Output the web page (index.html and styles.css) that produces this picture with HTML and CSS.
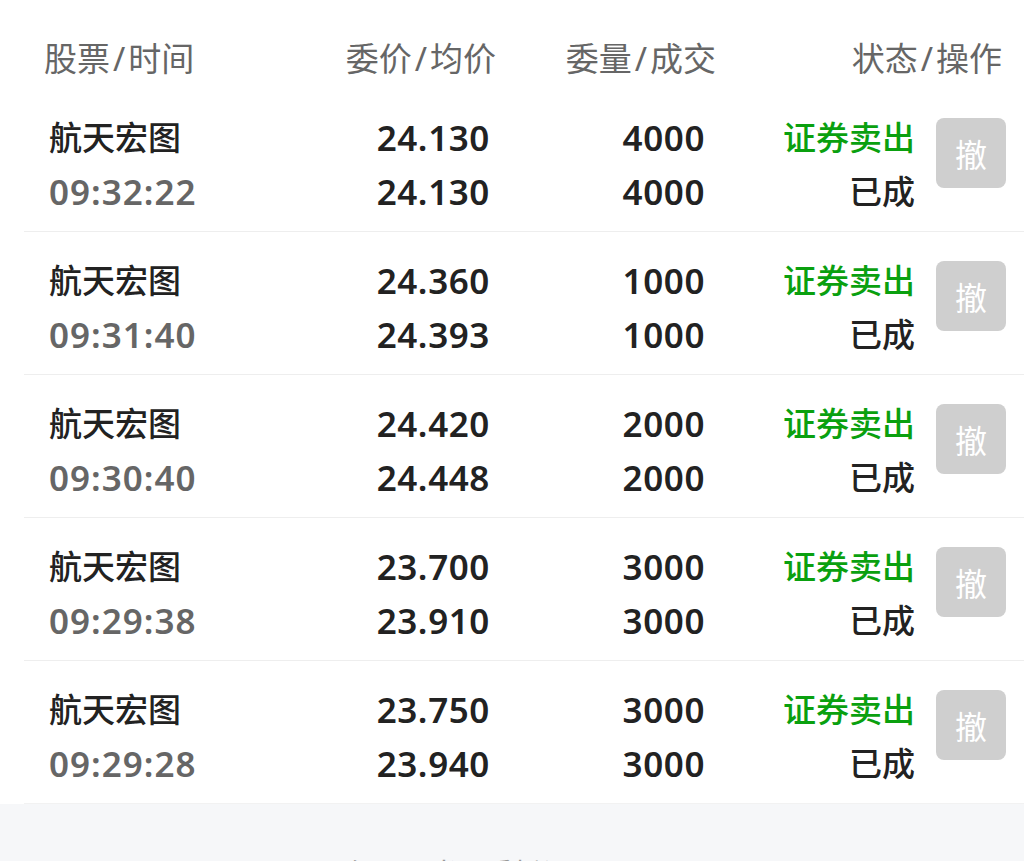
FILE: index.html
```html
<!DOCTYPE html>
<html lang="zh-CN">
<head>
<meta charset="utf-8">
<title>委托</title>
<link rel="stylesheet" href="styles.css">
</head>
<body>
<div class="panel">
  <div class="head">
    <div class="h h1">股票<span class="sl">/</span>时间</div>
    <div class="h">委价<span class="sl">/</span>均价</div>
    <div class="h">委量<span class="sl">/</span>成交</div>
    <div class="h">状态<span class="sl">/</span>操作</div>
  </div>
  <div class="row">
    <div class="c c1"><span class="name">航天宏图</span><span class="time">09:32:22</span></div>
    <div class="c num"><span>24.130</span><span>24.130</span></div>
    <div class="c num"><span>4000</span><span>4000</span></div>
    <div class="c st"><span class="sell">证券卖出</span><span>已成</span></div>
    <div class="op"><button class="btn">撤</button></div>
  </div>
  <div class="row">
    <div class="c c1"><span class="name">航天宏图</span><span class="time">09:31:40</span></div>
    <div class="c num"><span>24.360</span><span>24.393</span></div>
    <div class="c num"><span>1000</span><span>1000</span></div>
    <div class="c st"><span class="sell">证券卖出</span><span>已成</span></div>
    <div class="op"><button class="btn">撤</button></div>
  </div>
  <div class="row">
    <div class="c c1"><span class="name">航天宏图</span><span class="time">09:30:40</span></div>
    <div class="c num"><span>24.420</span><span>24.448</span></div>
    <div class="c num"><span>2000</span><span>2000</span></div>
    <div class="c st"><span class="sell">证券卖出</span><span>已成</span></div>
    <div class="op"><button class="btn">撤</button></div>
  </div>
  <div class="row">
    <div class="c c1"><span class="name">航天宏图</span><span class="time">09:29:38</span></div>
    <div class="c num"><span>23.700</span><span>23.910</span></div>
    <div class="c num"><span>3000</span><span>3000</span></div>
    <div class="c st"><span class="sell">证券卖出</span><span>已成</span></div>
    <div class="op"><button class="btn">撤</button></div>
  </div>
  <div class="row">
    <div class="c c1"><span class="name">航天宏图</span><span class="time">09:29:28</span></div>
    <div class="c num"><span>23.750</span><span>23.940</span></div>
    <div class="c num"><span>3000</span><span>3000</span></div>
    <div class="c st"><span class="sell">证券卖出</span><span>已成</span></div>
    <div class="op"><button class="btn">撤</button></div>
  </div>
</div>
<div class="foot">仅显示当日委托记录</div>
</body>
</html>
```
FILE: styles.css
```css
html, body {
  margin: 0;
  padding: 0;
  background: #f6f7f9;
  overflow: hidden;
  font-family: "Noto Sans", "Noto Sans CJK SC", sans-serif;
}
.panel {
  background: #ffffff;
}
.head {
  display: grid;
  grid-template-columns: 1fr 160px 220px 286px;
  padding: 0 22px 0 44px;
  height: 89px;
  box-sizing: border-box;
}
.h {
  font-size: 33px;
  color: #666666;
  text-align: right;
  line-height: 40px;
  margin-top: 37px;
  align-self: start;
  font-family: "Noto Sans CJK SC", sans-serif;
}
.h1 {
  text-align: left;
}
.sl {
  font-family: "Noto Sans", sans-serif;
  margin: 0 3px;
}
.row {
  display: grid;
  grid-template-columns: 1fr 150px 215px 210px 91px;
  margin-left: 24px;
  padding: 22px 18px 12px 25px;
  border-bottom: 1px solid #eeeeee;
  box-sizing: border-box;
  height: 143px;
}
.row:last-child {
  border-bottom-color: #f2f2f2;
}
.c {
  display: flex;
  flex-direction: column;
  line-height: 54px;
}
.c1 .name {
  font-size: 33px;
  color: #222222;
  font-weight: 500;
}
.c1 .time {
  font-size: 35px;
  color: #666666;
  font-weight: 600;
  letter-spacing: 1px;
}
.num {
  text-align: right;
  font-size: 35px;
  font-weight: 600;
  color: #222222;
  letter-spacing: 0.6px;
}
.st {
  text-align: right;
  font-size: 33px;
  color: #222222;
  font-weight: 500;
}
.st .sell {
  color: #0aa00f;
}
.op {
  display: flex;
  justify-content: flex-end;
  align-items: flex-start;
  padding-top: 7px;
}
.btn {
  width: 70px;
  height: 70px;
  border: none;
  border-radius: 8px;
  background: #cfcfcf;
  color: #ffffff;
  font-family: "Noto Sans CJK SC", sans-serif;
  font-size: 32px;
  padding: 0;
  line-height: 70px;
}
.foot {
  text-align: center;
  font-size: 28px;
  color: #9a9a9a;
  padding-top: 48px;
  padding-right: 80px;
  line-height: 40px;
  font-family: "Noto Sans CJK SC", sans-serif;
}
```
